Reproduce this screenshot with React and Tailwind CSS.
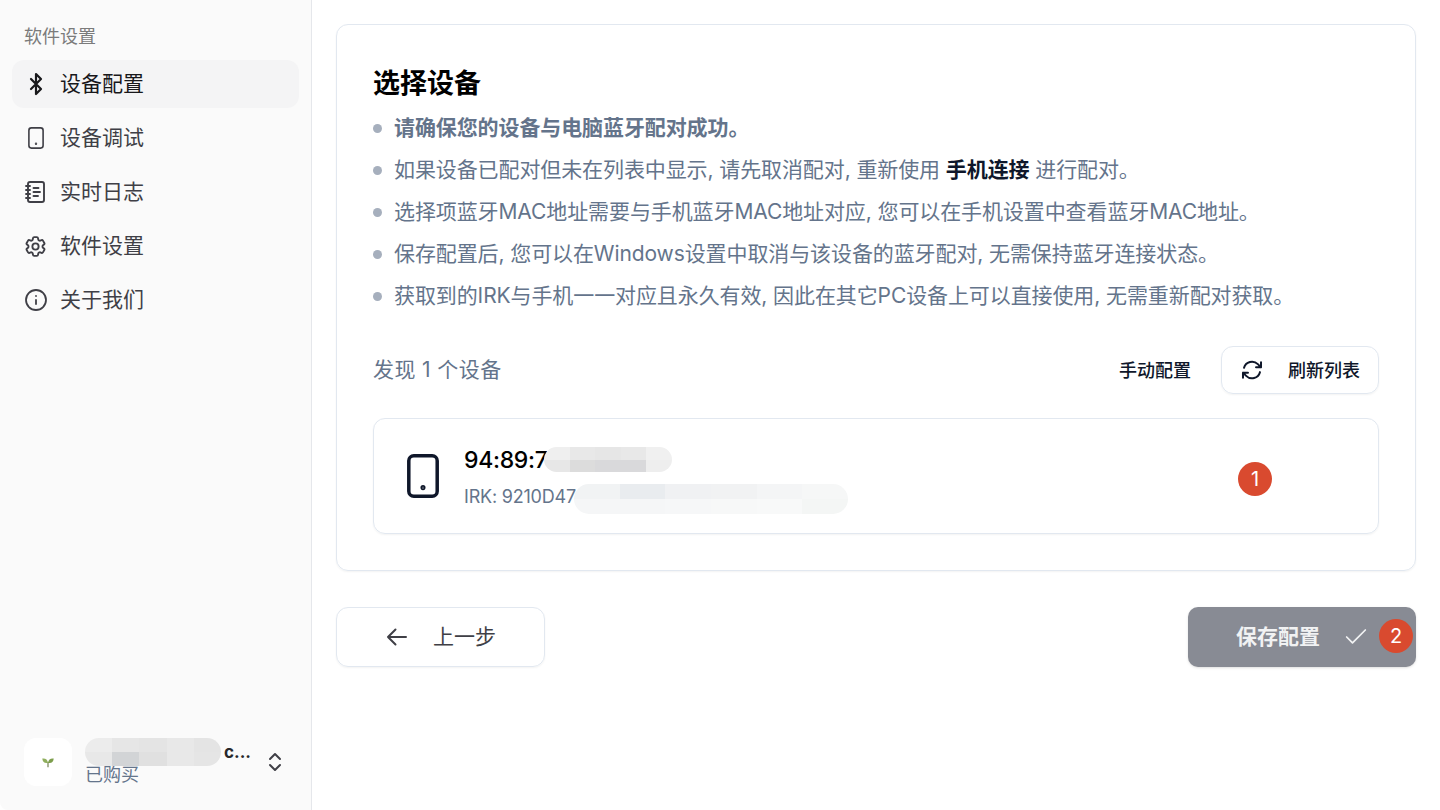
import React from "react";
import { Bluetooth, NotebookText, Info, ChevronsUpDown, Check } from "lucide-react";
import { HiOutlineCog6Tooth, HiOutlineArrowPath, HiOutlineArrowLeft } from "react-icons/hi2";

const fontStack = { fontFamily: '"Inter", "Noto Sans CJK SC", sans-serif' };

function TabletIcon({ className, strokeWidth = 2 }) {
    return (
        <svg viewBox="0 0 24 24" fill="none" stroke="currentColor" strokeWidth={strokeWidth} className={className}>
            <rect x="4.9" y="1.9" width="14.200" height="20.200" rx="2.500" />
            <circle cx="12" cy="17.800" r="0.4" fill="currentColor" />
        </svg>
    );
}

function Sprout() {
    return (
        <svg viewBox="0 0 16 16" className="w-3.5 h-3.5">
            <path d="M8 8v6" stroke="#6b7a4a" strokeWidth="1.3" />
            <path d="M8 9C7.500 5 5 3.500 1.500 4c0 3.500 2.500 6 6.500 5Z" fill="#8fae5d" />
            <path d="M8 9c.5-4 3-5.500 6.500-5 0 3.500-2.500 6-6.500 5Z" fill="#7d9e4c" />
        </svg>
    );
}

// blurred-out patches of the screenshot: rows of flat grey cells
function Mosaic({ className, rows }) {
    return (
        <div className={`absolute rounded-full overflow-hidden flex flex-col ${className}`}>
            {rows.map((row, r) => (
                <div key={r} className="flex flex-1">
                    {row.map((cell, c) => (
                        <div key={c} className={`flex-1 ${cell}`}></div>
                    ))}
                </div>
            ))}
        </div>
    );
}

const navItems = [
    { label: "设备配置", icon: <Bluetooth className="w-6 h-6" strokeWidth={2.2} />, active: true },
    { label: "设备调试", icon: <TabletIcon className="w-6 h-6" strokeWidth={1.6} /> },
    { label: "实时日志", icon: <NotebookText className="w-6 h-6" strokeWidth={1.9} /> },
    { label: "软件设置", icon: <HiOutlineCog6Tooth className="w-[25px] h-[25px] -ml-px" strokeWidth={1.8} /> },
    { label: "关于我们", icon: <Info className="w-6 h-6" strokeWidth={1.8} /> },
];

function Sidebar() {
    return (
        <aside className="w-[312px] shrink-0 h-full flex flex-col bg-[#fafafa] border-r border-[#e5e7eb] rounded-bl-lg">
            <div className="px-6 pt-[25px] text-[18px] leading-[24px] text-[#7b7b7b]">软件设置</div>
            <nav className="flex flex-col gap-1.5 px-3 mt-[11px]">
                {navItems.map((item) => (
                    <div
                        key={item.label}
                        className={`h-12 flex items-center gap-3 px-3 rounded-xl text-[21px] ${item.active ? "bg-[#f4f4f5] text-[#18181b]" : "text-[#3f3f46]"}`}
                    >
                        {item.icon}
                        <span>{item.label}</span>
                    </div>
                ))}
            </nav>
            <div className="mt-auto mb-6 px-6 flex items-center">
                <div className="w-12 h-12 rounded-xl bg-white flex items-center justify-center">
                    <Sprout />
                </div>
                <div className="relative ml-[13px] w-[170px] h-12">
                    <div className="text-[17px] leading-[28px] font-bold text-[#27272a] text-right pr-[4px]">c...</div>
                    <div className="text-[18px] leading-[18px] text-[#64748b]">已购买</div>
                    <Mosaic
                        className="left-0 top-0 w-[136px] h-[28px]"
                        rows={[
                            ["bg-[#ececec]", "bg-[#e6e6e6]", "bg-[#e4e4e4]", "bg-[#e8e8e8]", "bg-[#e4e4e4]"],
                            ["bg-[#e8e8e8]", "bg-[#d2d4d6]", "bg-[#e0e0e0]", "bg-[#e8e8e8]", "bg-[#e5e5e5]"],
                        ]}
                    />
                </div>
                <ChevronsUpDown className="w-6 h-6 text-[#3f3f46] ml-2" strokeWidth={2} />
            </div>
        </aside>
    );
}

const tips = [
    <span className="font-bold">请确保您的设备与电脑蓝牙配对成功。</span>,
    <span>如果设备已配对但未在列表中显示, 请先取消配对, 重新使用 <b className="font-bold text-[#0f172a]">手机连接</b> 进行配对。</span>,
    <span>选择项蓝牙MAC地址需要与手机蓝牙MAC地址对应, 您可以在手机设置中查看蓝牙MAC地址。</span>,
    <span>保存配置后, 您可以在Windows设置中取消与该设备的蓝牙配对, 无需保持蓝牙连接状态。</span>,
    <span>获取到的IRK与手机一一对应且永久有效, 因此在其它PC设备上可以直接使用, 无需重新配对获取。</span>,
];

function Badge({ children, className }) {
    return (
        <div className={`absolute w-[34px] h-[34px] rounded-full bg-[#d94a2f] text-white text-[20px] flex items-center justify-center ${className}`}>
            {children}
        </div>
    );
}

function DeviceCard() {
    return (
        <div className="relative mt-6 h-[116px] rounded-xl border border-[#e2e8f0] shadow-xs flex items-center pl-[25px]">
            <TabletIcon className="w-12 h-12 text-[#0f172a]" strokeWidth={1.75} />
            <div className="ml-[17px] relative">
                <div className="text-[23px] leading-[34px] text-black font-medium tracking-[-0.3px]">94:89:7</div>
                <div className="mt-2 text-[18px] leading-[24px] text-[#64748b] tracking-[-0.2px]">IRK: 9210D47</div>
                <Mosaic
                    className="left-[80px] top-[4px] w-[128px] h-[25px]"
                    rows={[
                        ["bg-[#efefef]", "bg-[#e8e8e8]", "bg-[#e6e6e6]", "bg-[#e8e8e8]", "bg-[#f0f0f0]"],
                        ["bg-[#e7e7e7]", "bg-[#dcdcdc]", "bg-[#d9d9db]", "bg-[#d9d9db]", "bg-[#eeeeee]"],
                    ]}
                />
                <Mosaic
                    className="left-[110px] top-[41px] w-[274px] h-[30px]"
                    rows={[
                        ["bg-[#f1f3f4]", "bg-[#e9ecef]", "bg-[#f0f1f3]", "bg-[#f1f2f3]", "bg-[#f4f5f6]", "bg-[#f6f7f7]"],
                        ["bg-[#f5f6f7]", "bg-[#f5f6f7]", "bg-[#f6f7f8]", "bg-[#f7f8f8]", "bg-[#f8f9f9]", "bg-[#f4f6f5]"],
                    ]}
                />
            </div>
            <Badge className="left-[864px] top-[43px]">1</Badge>
        </div>
    );
}

export default function App() {
    return (
        <div className="w-[1440px] h-[810px] flex bg-white overflow-hidden" style={fontStack}>
            <Sidebar />
            <main className="flex-1 pt-6 pl-6 pr-6">
                <section className="h-[547px] rounded-xl border border-[#e2e8f0] shadow-xs px-9 pt-10">
                    <h1 className="text-[27px] leading-[38px] font-bold text-black">选择设备</h1>
                    <ul className="mt-1 flex flex-col">
                        {tips.map((tip, idx) => (
                            <li key={idx} className="h-[42px] flex items-center text-[21px] tracking-[-0.1px] text-[#64748b] whitespace-pre">
                                <span className="w-[9px] h-[9px] rounded-full bg-[#a6afbd] mr-3 shrink-0"></span>
                                {tip}
                            </li>
                        ))}
                    </ul>
                    <div className="mt-[29px] flex items-center">
                        <div className="text-[21px] tracking-[0.4px] text-[#64748b]">发现 1 个设备</div>
                        <div className="ml-auto text-[18px] font-medium text-[#0f172a]">手动配置</div>
                        <button className="ml-[30px] w-[158px] h-12 rounded-xl border border-[#e2e8f0] shadow-xs flex items-center pl-[18px] gap-6 text-[18px] font-medium text-[#0f172a]">
                            <HiOutlineArrowPath className="w-6 h-6" strokeWidth={2} />
                            刷新列表
                        </button>
                    </div>
                    <DeviceCard />
                </section>
                <footer className="relative mt-9 flex justify-between">
                    <button className="w-[209px] h-[60px] rounded-xl border border-[#e2e8f0] shadow-xs flex items-center justify-center gap-6 text-[21px] text-[#3f3f46]">
                        <HiOutlineArrowLeft className="w-6 h-6" strokeWidth={2} />
                        上一步
                    </button>
                    <button className="w-[228px] h-[60px] rounded-[10px] bg-[#888b94] shadow-sm flex items-center pl-12 gap-[22px] text-[21px] font-bold text-[#f1f2f3]">
                        保存配置
                        <Check className="w-7 h-7" strokeWidth={1.5} />
                    </button>
                    <Badge className="right-[3px] top-[12px]">2</Badge>
                </footer>
            </main>
        </div>
    );
}
